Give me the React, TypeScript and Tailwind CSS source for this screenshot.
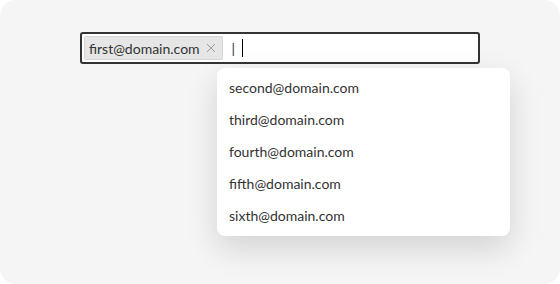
import React from "react";

const items = [
  "second@domain.com",
  "third@domain.com",
  "fourth@domain.com",
  "fifth@domain.com",
  "sixth@domain.com",
];

export default function App() {
  return (
    <div className="w-[560px] h-[284px] bg-white" style={{ fontFamily: "Lato, 'Open Sans', sans-serif" }}>
      <div className="w-[560px] h-[284px] bg-[#f5f5f5] rounded-[16px] pt-[32px] pl-[80px]">
        <div className="relative w-[400px]">
          <div className="h-[32px] border-2 border-[#333333] rounded-[3px] bg-white flex items-center px-[2px] gap-[8px]">
            <div className="h-[24px] flex items-center bg-[#e6e6e6] border border-[#d6d6d6] rounded-[2px] pl-[4px] pr-[6px] gap-[6px]">
              <span className="text-[14px] text-[#333333]">first@domain.com</span>
              <svg width="10" height="10" viewBox="0 0 10 10" className="text-[#999999]">
                <path d="M1 1 L9 9 M9 1 L1 9" stroke="currentColor" strokeWidth="1" />
              </svg>
            </div>
            <div className="flex items-center gap-[7px] pl-[1px]">
              <span className="text-[14px] text-[#333333]">|</span>
              <span className="w-[1px] h-[18px] bg-black" />
            </div>
          </div>
          <div className="absolute left-[137px] top-[36px] w-[293px] bg-white rounded-[8px] pt-[3px] pb-[5px] shadow-[0_12px_32px_rgba(0,0,0,0.14)]">
            {items.map((it) => (
              <div key={it} className="h-[32px] flex items-center px-[12px] text-[14px] text-[#333333]">
                {it}
              </div>
            ))}
          </div>
        </div>
      </div>
    </div>
  );
}
